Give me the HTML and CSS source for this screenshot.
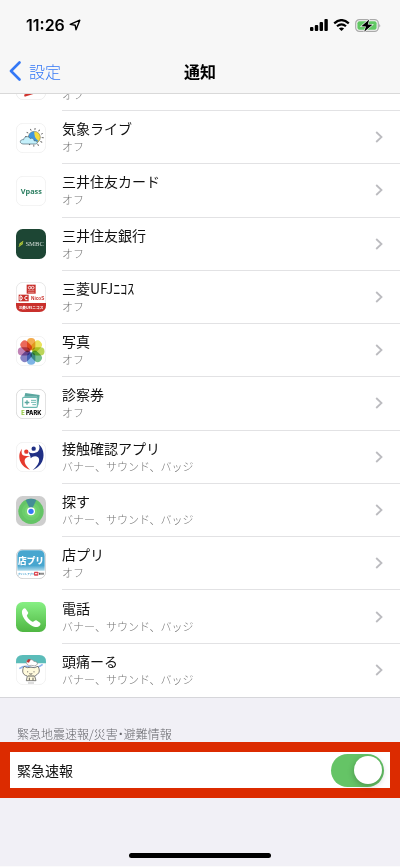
FILE: index.html
```html
<!DOCTYPE html>
<html lang="ja">
<head>
    <meta charset="UTF-8">
    <meta name="viewport" content="width=device-width, initial-scale=1.0">
    <title>通知</title>
    <link rel="stylesheet" href="styles.css">
</head>
<body>
    <header class="header">
        <div class="status-bar">
            <div class="status-left">
                <span class="time">11:26</span>
                <svg width="12" height="12" viewBox="0 0 12 12"><path d="M1.2 5.4 L10.8 1.2 L7 10.8 L6.2 6.2 Z" fill="none" stroke="#000" stroke-width="1.4" stroke-linejoin="round"/></svg>
            </div>
            <div class="status-right">
                <svg width="18" height="12" viewBox="0 0 18 12">
                    <rect x="0" y="8" width="3.4" height="4" rx="1"/>
                    <rect x="4.8" y="6" width="3.4" height="6" rx="1"/>
                    <rect x="9.6" y="3" width="3.4" height="9" rx="1"/>
                    <rect x="14.4" y="0" width="3.4" height="12" rx="1"/>
                </svg>
                <svg width="17" height="12" viewBox="0 0 17 12">
                    <path d="M1.2 4.4 Q8.5 -2.2 15.8 4.4 M4 7.3 Q8.5 3.3 13 7.3" fill="none" stroke="#000" stroke-width="2.2"/>
                    <path d="M8.5 12 L5.9 9.4 Q8.5 7.4 11.1 9.4 Z"/>
                </svg>
                <svg width="26" height="13" viewBox="0 0 26 13">
                    <rect x="0.7" y="0.7" width="22.6" height="11.6" rx="3.6" fill="none" stroke="#aaa" stroke-width="1.2"/>
                    <rect x="2.4" y="2.3" width="19.2" height="8.4" rx="2" fill="#62c864"/>
                    <path d="M24.3 4.5 Q26 6.5 24.3 8.5 Z" fill="#999"/>
                    <path d="M14.2 0.4 L6.4 7.2 L11 7.5 L9.2 12.8 L17.4 5.7 L12.8 5.4 Z" stroke="#f7f7f7" stroke-width="1.2" paint-order="stroke"/>
                </svg>
            </div>
        </div>
        <nav class="nav-bar">
            <a class="back" href="#">
                <svg width="12" height="20" viewBox="0 0 12 20"><path d="M10.5 1.5 L2 10 L10.5 18.5" fill="none" stroke="#3478f6" stroke-width="2.6" stroke-linecap="round" stroke-linejoin="round"/></svg>
                設定
            </a>
            <h1 class="title">通知</h1>
        </nav>
    </header>

    <main class="content">
        <ul class="app-list">
            <li class="app-item clipped">
                <a class="app-link" href="#">
                    <svg class="icon" viewBox="0 0 90 90"><rect x="1" y="1" width="88" height="88" rx="20" fill="#fff" stroke="#e6e6e6" stroke-width="2"/><path d="M24 74 L60 60 L52 72 L26 80 Z" fill="#d0332e"/></svg>
                    <span class="app-body"><span class="app-text"><span class="app-status">オフ</span></span></span>
                </a>
            </li>
            <li class="app-item">
                <a class="app-link" href="#">
                    <svg class="icon" viewBox="0 0 90 90">
                        <rect x="1" y="1" width="88" height="88" rx="20" fill="#fff" stroke="#ececec" stroke-width="2"/>
                        <circle cx="55" cy="43" r="25" fill="none" stroke="#555" stroke-width="6" stroke-dasharray="2.5 10.6"/>
                        <circle cx="55" cy="43" r="18" fill="#f5dc3c" stroke="#666" stroke-width="1.5"/>
                        <path d="M55 25 A18 18 0 0 0 38 49 L56 59 L68 54 Q53 46 55 25Z" fill="#3f95dd"/>
                        <path d="M21 63 C8 61 12 48 23 50 C24 39 39 38 43 47 C49 43 55 49 54 53 C67 53 66 63 58 63 Z" fill="#c4f0fb" stroke="#4b6470" stroke-width="2"/>
                    </svg>
                    <span class="app-body">
                        <span class="app-text"><span class="app-name">気象ライブ</span><span class="app-status">オフ</span></span>
                        <svg class="chevron" viewBox="0 0 8 12"><path d="M1.2 1 L6.5 6 L1.2 11"/></svg>
                    </span>
                </a>
            </li>
            <li class="app-item">
                <a class="app-link" href="#">
                    <svg class="icon" viewBox="0 0 90 90">
                        <rect x="1" y="1" width="88" height="88" rx="20" fill="#fff" stroke="#ececec" stroke-width="2"/>
                        <text class="logo-vpass" x="46" y="54" text-anchor="middle">Vpass</text>
                    </svg>
                    <span class="app-body">
                        <span class="app-text"><span class="app-name">三井住友カード</span><span class="app-status">オフ</span></span>
                        <svg class="chevron" viewBox="0 0 8 12"><path d="M1.2 1 L6.5 6 L1.2 11"/></svg>
                    </span>
                </a>
            </li>
            <li class="app-item">
                <a class="app-link" href="#">
                    <svg class="icon" viewBox="0 0 90 90">
                        <rect width="90" height="90" rx="20" fill="#1d4634"/>
                        <path d="M8 54 L11 43 L22 35 L20 46 Z" fill="#bed23a"/><path d="M8 54 L20 39" stroke="#658b35" stroke-width="2"/>
                        <text class="logo-smbc" x="56" y="52" text-anchor="middle">SMBC</text>
                    </svg>
                    <span class="app-body">
                        <span class="app-text"><span class="app-name">三井住友銀行</span><span class="app-status">オフ</span></span>
                        <svg class="chevron" viewBox="0 0 8 12"><path d="M1.2 1 L6.5 6 L1.2 11"/></svg>
                    </span>
                </a>
            </li>
            <li class="app-item">
                <a class="app-link" href="#">
                    <svg class="icon" viewBox="0 0 90 90">
                        <rect x="1" y="1" width="88" height="88" rx="20" fill="#fff" stroke="#ddd" stroke-width="2"/>
                        <path d="M0 63 H90 V70 Q90 90 70 90 H20 Q0 90 0 70 Z" fill="#c9302c"/>
                        <rect x="32" y="8" width="27" height="27" fill="#c9302c"/>
                        <circle cx="41" cy="17" r="4" fill="none" stroke="#fff" stroke-width="2.5"/><circle cx="50" cy="17" r="4" fill="none" stroke="#fff" stroke-width="2.5"/>
                        <path d="M36 26 H55 M36 31 H55" stroke="#e9aaa8" stroke-width="2"/>
                        <rect x="8" y="38" width="30" height="20" fill="#c9302c"/>
                        <path d="M12 42 H16 Q22 48 16 54 H12 Z M34 43 H29 Q23 48 29 53 H34" fill="none" stroke="#fff" stroke-width="3"/>
                        <text class="logo-nicos" x="65" y="54" text-anchor="middle">NicoS</text>
                        <text class="logo-ufj" x="45" y="80" text-anchor="middle">三菱UFJニコス</text>
                    </svg>
                    <span class="app-body">
                        <span class="app-text"><span class="app-name">三菱UFJﾆｺｽ</span><span class="app-status">オフ</span></span>
                        <svg class="chevron" viewBox="0 0 8 12"><path d="M1.2 1 L6.5 6 L1.2 11"/></svg>
                    </span>
                </a>
            </li>
            <li class="app-item">
                <a class="app-link" href="#">
                    <svg class="icon" viewBox="0 0 90 90">
                        <rect x="1" y="1" width="88" height="88" rx="20" fill="#fff" stroke="#ececec" stroke-width="2"/>
                        <g class="petals">
                            <rect x="33" y="6" width="25" height="37" rx="12" fill="#f2a33c"/>
                            <rect x="33" y="6" width="25" height="37" rx="12" fill="#e9e04a" transform="rotate(45 45.5 46)"/>
                            <rect x="33" y="6" width="25" height="37" rx="12" fill="#b4d147" transform="rotate(90 45.5 46)"/>
                            <rect x="33" y="6" width="25" height="37" rx="12" fill="#66b884" transform="rotate(135 45.5 46)"/>
                            <rect x="33" y="6" width="25" height="37" rx="12" fill="#70ace4" transform="rotate(180 45.5 46)"/>
                            <rect x="33" y="6" width="25" height="37" rx="12" fill="#7a77bf" transform="rotate(225 45.5 46)"/>
                            <rect x="33" y="6" width="25" height="37" rx="12" fill="#b975ad" transform="rotate(270 45.5 46)"/>
                            <rect x="33" y="6" width="25" height="37" rx="12" fill="#e95849" transform="rotate(315 45.5 46)"/>
                        </g>
                    </svg>
                    <span class="app-body">
                        <span class="app-text"><span class="app-name">写真</span><span class="app-status">オフ</span></span>
                        <svg class="chevron" viewBox="0 0 8 12"><path d="M1.2 1 L6.5 6 L1.2 11"/></svg>
                    </span>
                </a>
            </li>
            <li class="app-item">
                <a class="app-link" href="#">
                    <svg class="icon" viewBox="0 0 90 90">
                        <rect x="1" y="1" width="88" height="88" rx="20" fill="#fff" stroke="#ccc" stroke-width="2"/>
                        <path d="M25 23 L28 12 L71 18 L67 49 L63 49 V23 Z" fill="#5aa69f"/>
                        <rect x="20" y="25" width="44" height="30" rx="3" fill="#fff" stroke="#6bb8b0" stroke-width="3.5"/>
                        <path d="M33 34 V47 M26 40.500 H40" stroke="#5aa69f" stroke-width="4"/>
                        <path d="M45 34 H60 M45 40 H60 M49 47 H60" stroke="#6bb8b0" stroke-width="3"/>
                        <text class="logo-epark" x="46" y="77" text-anchor="middle"><tspan fill="#8fc63d">E</tspan> PARK</text>
                    </svg>
                    <span class="app-body">
                        <span class="app-text"><span class="app-name">診察券</span><span class="app-status">オフ</span></span>
                        <svg class="chevron" viewBox="0 0 8 12"><path d="M1.2 1 L6.5 6 L1.2 11"/></svg>
                    </span>
                </a>
            </li>
            <li class="app-item">
                <a class="app-link" href="#">
                    <svg class="icon" viewBox="0 0 90 90">
                        <rect x="1" y="1" width="88" height="88" rx="20" fill="#fff" stroke="#ececec" stroke-width="2"/>
                        <circle cx="31" cy="29" r="6.5" fill="#e6392d"/>
                        <path d="M18 20 C3 38 8 72 42 83 C27 70 22 56 29 49 C33 45 38 44 43 44 C36 42 27 43 21 40 C16 36 16 28 18 20 Z" fill="#e6392d"/>
                        <circle cx="53" cy="20" r="6.5" fill="#203085"/>
                        <path d="M68 7 C90 24 90 70 50 84 C68 70 74 54 66 46 C60 40 50 42 44 49 C44 41 40 36 38 30 C47 36 61 34 67 27 C72 21 71 14 68 7 Z" fill="#203085"/>
                    </svg>
                    <span class="app-body">
                        <span class="app-text"><span class="app-name">接触確認アプリ</span><span class="app-status">バナー、サウンド、バッジ</span></span>
                        <svg class="chevron" viewBox="0 0 8 12"><path d="M1.2 1 L6.5 6 L1.2 11"/></svg>
                    </span>
                </a>
            </li>
            <li class="app-item">
                <a class="app-link" href="#">
                    <svg class="icon" viewBox="0 0 90 90">
                        <rect width="90" height="90" rx="20" fill="#cecece"/>
                        <circle cx="45" cy="46" r="38" fill="#64c466"/>
                        <circle cx="45" cy="46" r="27" fill="#6ccd6b"/>
                        <circle cx="45" cy="46" r="18" fill="#76d673"/>
                        <path d="M45 46 L29 12 Q45 4 61 12 Z" fill="#448d97"/>
                        <circle cx="45" cy="46" r="12" fill="#fff"/><circle cx="45" cy="46" r="8" fill="#3478f6"/>
                    </svg>
                    <span class="app-body">
                        <span class="app-text"><span class="app-name">探す</span><span class="app-status">バナー、サウンド、バッジ</span></span>
                        <svg class="chevron" viewBox="0 0 8 12"><path d="M1.2 1 L6.5 6 L1.2 11"/></svg>
                    </span>
                </a>
            </li>
            <li class="app-item">
                <a class="app-link" href="#">
                    <svg class="icon" viewBox="0 0 90 90">
                        <defs><linearGradient id="shop" x1="0" y1="0" x2="0" y2="1"><stop offset="0.75" stop-color="#48a6cf"/><stop offset="1" stop-color="#b3dcec"/></linearGradient></defs>
                        <rect x="1" y="1" width="88" height="88" rx="20" fill="#fff" stroke="#bbb" stroke-width="2"/>
                        <path d="M4 65 V21 Q4 4 21 4 H69 Q86 4 86 21 V65 Z" fill="url(#shop)"/>
                        <text class="logo-shop" x="45" y="45" text-anchor="middle">店プリ</text>
                        <text class="logo-shop-sub" x="30" y="79" text-anchor="middle">プリントアプリ</text>
                        <rect x="54" y="68" width="13" height="12" rx="2" fill="#dd4650"/><path d="M57 74 H64" stroke="#fff" stroke-width="3"/><path d="M69 74 H83" stroke="#555" stroke-width="6" stroke-dasharray="3 1"/>
                    </svg>
                    <span class="app-body">
                        <span class="app-text"><span class="app-name">店プリ</span><span class="app-status">オフ</span></span>
                        <svg class="chevron" viewBox="0 0 8 12"><path d="M1.2 1 L6.5 6 L1.2 11"/></svg>
                    </span>
                </a>
            </li>
            <li class="app-item">
                <a class="app-link" href="#">
                    <svg class="icon" viewBox="0 0 90 90">
                        <defs><linearGradient id="phone" x1="0" y1="0" x2="0" y2="1"><stop offset="0" stop-color="#87f084"/><stop offset="1" stop-color="#4fb642"/></linearGradient></defs>
                        <rect width="90" height="90" rx="20" fill="url(#phone)"/>
                        <path d="M18 27 C20 20 26 16 29 20 L36 31 C39 36 31 38 33 43 C36 50 43 56 49 59 C54 61 56 53 61 55 L72 62 C77 67 69 74 64 75 C45 77 15 49 18 27 Z" fill="#fff"/>
                    </svg>
                    <span class="app-body">
                        <span class="app-text"><span class="app-name">電話</span><span class="app-status">バナー、サウンド、バッジ</span></span>
                        <svg class="chevron" viewBox="0 0 8 12"><path d="M1.2 1 L6.5 6 L1.2 11"/></svg>
                    </span>
                </a>
            </li>
            <li class="app-item">
                <a class="app-link" href="#">
                    <svg class="icon" viewBox="0 0 90 90">
                        <rect x="1" y="1" width="88" height="88" rx="20" fill="#fff" stroke="#ececec" stroke-width="2"/>
                        <path d="M0 25 V20 Q0 0 20 0 H70 Q90 0 90 20 V25 Z" fill="#5bbcb9"/>
                        <path d="M10 41 Q26 30 42 37 T80 28" fill="none" stroke="#92b5ec" stroke-width="5"/>
                        <path d="M31 23 Q29 14 39 16 Q49 10 54 19 Q66 20 64 28 Q58 36 46 31 Q34 34 31 23 Z" fill="#fff" stroke="#666" stroke-width="1.500"/>
                        <path d="M32 21 L36 13 L44 13 L39 23 Z" fill="#bd3434"/>
                        <path d="M24 34 L34 38 Q45 35 55 38 L66 34 Q75 50 64 58 Q58 62 56 63 L60 77 H31 L34 63 Q20 60 20 48 Q20 40 24 34 Z" fill="#fffadc" stroke="#666" stroke-width="2.5"/>
                        <path d="M35 49 V52 M54 49 V52 M40 56 Q45 59 49 56 M36 63 H55 M40 68 V76 M51 68 V76" fill="none" stroke="#444" stroke-width="2.500"/>
                        <path d="M36 84 H54" stroke="#bbb" stroke-width="3"/>
                    </svg>
                    <span class="app-body">
                        <span class="app-text"><span class="app-name">頭痛ーる</span><span class="app-status">バナー、サウンド、バッジ</span></span>
                        <svg class="chevron" viewBox="0 0 8 12"><path d="M1.2 1 L6.5 6 L1.2 11"/></svg>
                    </span>
                </a>
            </li>
        </ul>
    </main>

    <section class="alerts">
        <h2 class="alerts-title">緊急地震速報/災害・避難情報</h2>
        <div class="alert-row">
            <label for="emergency">緊急速報</label>
            <input class="switch" type="checkbox" id="emergency" checked>
        </div>
    </section>
    <footer class="home"><div class="home-bar"></div></footer>
</body>
</html>
```
FILE: styles.css
```css
* {
    box-sizing: border-box;
}

body {
    margin: 0;
    min-height: 100vh;
    display: flex;
    flex-direction: column;
    font-family: "Noto Sans CJK JP", sans-serif;
    color: #111;
    background-color: #f1f0f6;
}

a {
    color: inherit;
    text-decoration: none;
}

.header {
    background-color: #f7f7f7;
    border-bottom: 1px solid #d9d9d9;
}

.status-bar {
    display: flex;
    justify-content: space-between;
    align-items: center;
    height: 50px;
    padding: 0 19px 0 26px;
}

.status-left,
.status-right {
    display: flex;
    align-items: center;
    gap: 5px;
}

.status-left {
    gap: 4px;
}

.time {
    font-family: Inter, sans-serif;
    font-size: 16px;
    font-weight: 600;
    color: #000;
}

.nav-bar {
    display: grid;
    grid-template-columns: 1fr auto 1fr;
    align-items: center;
    height: 43px;
    padding: 0 9px 2px;
}

.back {
    display: flex;
    align-items: center;
    gap: 8px;
    font-size: 16px;
    font-weight: 300;
    color: #3478f6;
}

.title {
    margin: 0;
    font-size: 16px;
    font-weight: 700;
    color: #000;
}

.content {
    flex: 1;
    display: flex;
    background-color: #fff;
    border-bottom: 1px solid #d6d6da;
}

.app-list {
    flex: 1;
    display: grid;
    grid-template-rows: 17px;
    grid-auto-rows: 1fr;
    margin: 0;
    padding: 0;
    list-style: none;
}

.app-item {
    display: flex;
}

/* row scrolled under the header */
.clipped {
    align-items: flex-end;
    overflow: hidden;
}

.clipped .app-link {
    height: 53px;
}

.clipped .app-text {
    align-self: flex-end;
    padding-bottom: 8px;
}

.app-link {
    flex: 1;
    display: flex;
    align-items: center;
    gap: 16px;
    padding-left: 16px;
}

.icon {
    width: 30px;
    height: 30px;
}

.app-body {
    flex: 1;
    align-self: stretch;
    display: flex;
    align-items: center;
    justify-content: space-between;
    padding-right: 17px;
    border-bottom: 1px solid #e2e2e4;
}

.app-item:last-child .app-body {
    border-bottom: none;
}

.app-text {
    display: flex;
    flex-direction: column;
    padding-bottom: 2px;
}

.app-name {
    font-size: 14px;
    line-height: 20px;
}

.app-status {
    font-size: 11px;
    font-weight: 300;
    line-height: 16px;
    color: #777;
}

.chevron {
    width: 8px;
    height: 12px;
    fill: none;
    stroke: #bcbcc0;
    stroke-width: 1.8;
}

.petals rect {
    mix-blend-mode: multiply;
    opacity: 0.9;
}

.logo-vpass {
    font: 700 22px "Open Sans", sans-serif;
    fill: #2d7f62;
}

.logo-smbc {
    font: 20px "Liberation Serif", serif;
    fill: #d5ded9;
}

.logo-nicos {
    font: 700 14px "Liberation Sans", sans-serif;
    fill: #c9302c;
}

.logo-ufj {
    font: 700 11px "Noto Sans CJK JP", sans-serif;
    fill: #fff;
}

.logo-epark {
    font: 800 17px Inter, sans-serif;
}

.logo-shop {
    font: 900 26px "Noto Sans CJK JP", sans-serif;
    fill: #fff;
}

.logo-shop-sub {
    font: 700 7px "Noto Sans CJK JP", sans-serif;
    fill: #2590c6;
}

.alerts-title {
    margin: 0;
    padding: 28px 17px 0;
    font-size: 12px;
    font-weight: 300;
    line-height: 16px;
    color: #66666b;
    font-feature-settings: "palt";
}

.alert-row {
    display: flex;
    align-items: center;
    justify-content: space-between;
    height: 56px;
    padding: 0 6px 0 7px;
    font-size: 14px;
    background-color: #fff;
    border: 10px solid #dc2b00;
}

.switch {
    appearance: none;
    display: flex;
    align-items: center;
    width: 53px;
    height: 33px;
    margin: 0;
    padding: 2px;
    border-radius: 17px;
    background-color: #ccc;
    cursor: pointer;
}

.switch::before {
    content: "";
    width: 28px;
    height: 28px;
    border-radius: 50%;
    background-color: #fff;
    box-shadow: 0 2px 6px rgba(0, 0, 0, 0.25);
}

.switch:checked {
    justify-content: flex-end;
    background-color: #65c466;
}

.home {
    display: flex;
    align-items: flex-end;
    justify-content: center;
    height: 69px;
    padding-bottom: 8px;
    border-bottom: 1px solid #fbfbfb;
}

.home-bar {
    width: 142px;
    height: 5px;
    border-radius: 3px;
    background-color: #000;
}
```
